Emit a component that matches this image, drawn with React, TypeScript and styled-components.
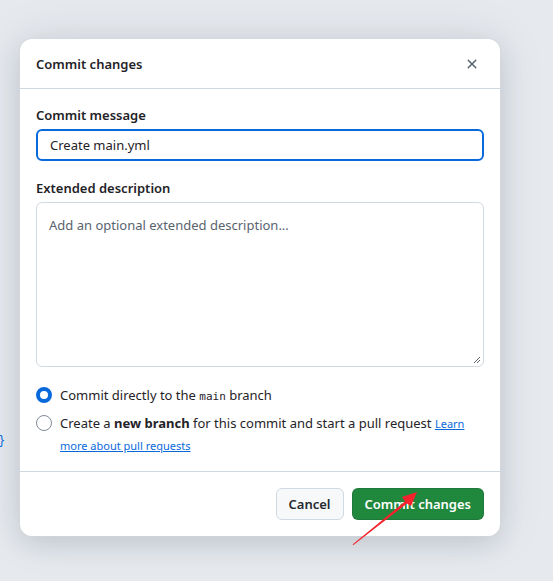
import React from "react";
import styled, { createGlobalStyle } from "styled-components";

const Global = createGlobalStyle`
  html, body { margin: 0; padding: 0; }
  body {
    background: #e6eaef;
    font-family: "Noto Sans", "Segoe UI", "Liberation Sans", sans-serif;
    color: #1f2328;
    width: 553px;
    height: 581px;
    overflow: hidden;
  }
`;

const Page = styled.div`
  position: relative;
  width: 553px;
  height: 581px;
  padding: 39px 0 0 20px;
  box-sizing: border-box;
`;

const Brace = styled.span`
  position: absolute;
  left: -2px;
  top: 434px;
  font-family: "Liberation Mono", monospace;
  font-size: 12px;
  color: #0969da;
`;

const Dialog = styled.div`
  width: 480px;
  background: #ffffff;
  border-radius: 12px;
  box-shadow: 0 0 0 1px rgba(209, 217, 224, 0.5), 0 8px 24px rgba(37, 41, 46, 0.12),
    0 0 48px rgba(37, 41, 46, 0.1);
  display: flex;
  flex-direction: column;
`;

const Header = styled.div`
  display: flex;
  align-items: center;
  justify-content: space-between;
  height: 49px;
  padding: 0 12px 0 16px;
  border-bottom: 1px solid #d1d9e0;
`;

const Title = styled.h1`
  margin: 0;
  font-size: 13px;
  font-weight: 600;
`;

const Close = styled.button`
  width: 32px;
  height: 32px;
  border: none;
  background: transparent;
  display: flex;
  align-items: center;
  justify-content: center;
  color: #59636e;
  padding: 0;
`;

const Body = styled.div`
  padding: 16px 16px 15px;
  display: flex;
  flex-direction: column;
`;

const Label = styled.label`
  font-size: 13px;
  font-weight: 600;
  line-height: 20px;
  margin-bottom: 4px;
`;

const Input = styled.div`
  height: 32px;
  box-sizing: border-box;
  border: 2px solid #0969da;
  border-radius: 6px;
  padding: 0 12px;
  display: flex;
  align-items: center;
  font-size: 13px;
  margin-bottom: 17px;
`;

const TextArea = styled.div`
  position: relative;
  height: 165px;
  box-sizing: border-box;
  border: 1px solid #d1d9e0;
  border-radius: 6px;
  padding: 12px 12px;
  font-size: 13px;
  line-height: 20px;
  color: #59636e;
  margin-bottom: 17px;
`;

const Grip = styled.svg`
  position: absolute;
  right: 2px;
  bottom: 2px;
`;

const Options = styled.div`
  display: flex;
  flex-direction: column;
  gap: 6px;
`;

const Option = styled.div`
  display: flex;
  align-items: flex-start;
  gap: 8px;
  font-size: 13px;
  line-height: 22px;
`;

const Radio = styled.span<{ $checked?: boolean }>`
  flex: none;
  width: 16px;
  height: 16px;
  margin-top: 3px;
  box-sizing: border-box;
  border-radius: 50%;
  border: ${(p) => (p.$checked ? "4px solid #0969da" : "1px solid #818b98")};
  background: #fff;
`;

const Code = styled.code`
  font-family: "DejaVu Sans Mono", "Liberation Mono", monospace;
  font-size: 11px;
  line-height: 1;
`;

const Link = styled.a`
  color: #0969da;
  text-decoration: underline;
  font-size: 11px;
  line-height: 1;
`;

const Footer = styled.div`
  border-top: 1px solid #d1d9e0;
  padding: 16px;
  display: flex;
  justify-content: flex-end;
  gap: 8px;
`;

const Button = styled.button<{ $primary?: boolean }>`
  height: 32px;
  padding: 0 12px;
  border-radius: 6px;
  font-family: inherit;
  font-size: 13px;
  font-weight: 600;
  border: 1px solid ${(p) => (p.$primary ? "rgba(31,35,40,0.15)" : "#d1d9e0")};
  background: ${(p) => (p.$primary ? "#1f883d" : "#f6f8fa")};
  color: ${(p) => (p.$primary ? "#ffffff" : "#25292e")};
`;

const Arrow = styled.svg`
  position: absolute;
  left: 0;
  top: 0;
  pointer-events: none;
`;

export default function App() {
  return (
    <>
      <Global />
      <Page>
        <Brace>{"}"}</Brace>
        <Dialog>
          <Header>
            <Title>Commit changes</Title>
            <Close aria-label="Close">
              <svg width="16" height="16" viewBox="0 0 16 16" fill="currentColor">
                <path d="M3.72 3.72a.75.75 0 0 1 1.06 0L8 6.94l3.22-3.22a.749.749 0 0 1 1.275.326.749.749 0 0 1-.215.734L9.06 8l3.22 3.22a.749.749 0 0 1-.326 1.275.749.749 0 0 1-.734-.215L8 9.06l-3.220 3.22a.751.751 0 0 1-1.042-.018.751.751 0 0 1-.018-1.042L6.94 8 3.72 4.780a.75.75 0 0 1 0-1.06Z" />
              </svg>
            </Close>
          </Header>
          <Body>
            <Label>Commit message</Label>
            <Input>Create main.yml</Input>
            <Label>Extended description</Label>
            <TextArea>
              Add an optional extended description...
              <Grip width="10" height="10" viewBox="0 0 10 10">
                <path d="M9 3 L3 9 M9 6 L6 9" stroke="#59636e" strokeWidth="1" />
              </Grip>
            </TextArea>
            <Options>
              <Option>
                <Radio $checked />
                <span>
                  Commit directly to the <Code>main</Code> branch
                </span>
              </Option>
              <Option>
                <Radio />
                <span>
                  Create a <b>new branch</b> for this commit and start a pull request{" "}
                  <Link href="#">Learn more about pull requests</Link>
                </span>
              </Option>
            </Options>
          </Body>
          <Footer>
            <Button>Cancel</Button>
            <Button $primary>Commit changes</Button>
          </Footer>
        </Dialog>
        <Arrow width="553" height="581" viewBox="0 0 553 581">
          <path d="M352.5 544.5 L405 501.5 L402 497 L417 492 L411 506 L407 503.5 L353.5 545 Z" fill="#f5222d" />
        </Arrow>
      </Page>
    </>
  );
}
